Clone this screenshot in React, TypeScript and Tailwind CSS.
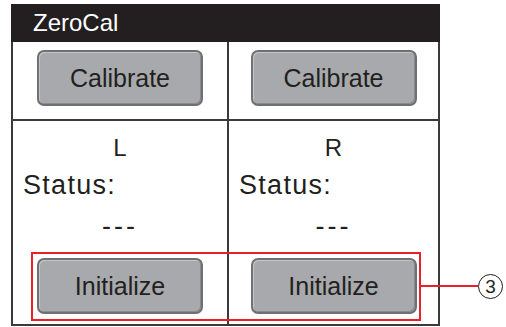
import React from 'react';

const font = { fontFamily: '"Liberation Sans", Arial, sans-serif' };

function PanelButton({ label }: { label: string }) {
  return (
    <button
      className="flex h-[56px] w-[166px] items-center justify-center rounded-[7px] border-2 border-[#6f7072] bg-[#a7a9ac] text-[25px] leading-none text-[#231f20] shadow-[inset_1px_1px_0_#c4c6c8,inset_-1px_-1px_0_#8a8b8d]"
    >
      {label}
    </button>
  );
}

function ChannelCell({ side, last }: { side: string; last?: boolean }) {
  return (
    <div className={`flex flex-col ${last ? '' : 'border-r-2 border-[#3a3a3a]'}`}>
      <div className="pt-[15px] text-center text-[24px] leading-none">{side}</div>
      <div className="mt-[12px] pl-[10px] text-[27px] leading-none tracking-[1.3px]">Status:</div>
      <div className="mt-[14px] text-center text-[27px] leading-none tracking-[3px]">---</div>
      <div className="mt-[18px] flex justify-center pb-[10px]">
        <PanelButton label="Initialize" />
      </div>
    </div>
  );
}

export default function App() {
  return (
    <div className="relative h-[327px] w-[506px] overflow-hidden bg-white text-[#231f20]" style={font}>
      <div className="ml-[11px] mt-[4px] w-[429px]">
        {/* Title bar */}
        <div className="flex h-[38px] items-center bg-[#231f20] pl-[22px] text-[24px] leading-none text-white">
          ZeroCal
        </div>

        <div className="border-x-2 border-b-2 border-[#3a3a3a]">
          {/* Calibrate row */}
          <div className="grid grid-cols-[216px_1fr] border-b-2 border-[#3a3a3a]">
            <div className="flex h-[77px] items-start justify-center border-r-2 border-[#3a3a3a] pt-[8px]">
              <PanelButton label="Calibrate" />
            </div>
            <div className="flex h-[77px] items-start justify-center pt-[8px]">
              <PanelButton label="Calibrate" />
            </div>
          </div>

          {/* Channel row */}
          <div className="grid grid-cols-[216px_1fr]">
            <ChannelCell side="L" />
            <ChannelCell side="R" last />
          </div>
        </div>
      </div>

      {/* Annotation: highlight box + callout */}
      <div className="absolute left-[31px] top-[252px] h-[69px] w-[390px] border-2 border-[#e8202a]" />
      <div className="absolute left-[420px] top-[285px] h-[2px] w-[58px] bg-[#e8202a]" />
      <div className="absolute left-[478px] top-[274px] flex h-[25px] w-[25px] items-center justify-center rounded-full border-[1.5px] border-[#231f20] bg-white text-[19px] leading-none">
        3
      </div>
    </div>
  );
}
